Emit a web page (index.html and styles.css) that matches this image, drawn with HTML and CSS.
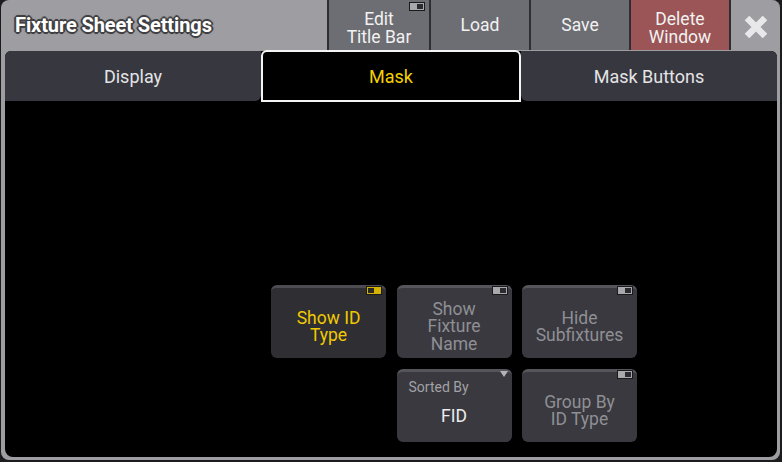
FILE: index.html
```html
<!DOCTYPE html>
<html>
<head>
<meta charset="utf-8">
<link rel="stylesheet" href="styles.css">
</head>
<body>
<div class="window">
  <div class="titlebar">
    <div class="title">Fixture Sheet Settings</div>
    <div class="tbtns">
      <div class="tbtn edit two"><span>Edit<br>Title Bar</span><span class="ind off"><i></i></span></div>
      <div class="tbtn">Load</div>
      <div class="tbtn">Save</div>
      <div class="tbtn del two"><span>Delete<br>Window</span></div>
      <div class="tbtn close">
        <svg width="24" height="22" viewBox="0 0 24 22"><path d="M3 2 L21 20 M21 2 L3 20" stroke="#e8e8ea" stroke-width="6.5" stroke-linecap="butt"/></svg>
      </div>
    </div>
  </div>
  <div class="panel">
    <div class="tabs">
      <div class="tab first">Display</div>
      <div class="tab active">Mask</div>
      <div class="tab last">Mask Buttons</div>
    </div>
    <div class="content">
      <div class="grid">
        <div class="btn on"><span>Show ID<br>Type</span><span class="ind yellow"><i></i></span></div>
        <div class="btn"><span>Show<br>Fixture<br>Name</span><span class="ind off"><i></i></span></div>
        <div class="btn"><span>Hide<br>Subfixtures</span><span class="ind off"><i></i></span></div>
        <div class="cell-empty"></div>
        <div class="btn select"><span class="label">Sorted By</span><span class="value">FID</span><span class="tri"></span></div>
        <div class="btn"><span>Group By<br>ID Type</span><span class="ind off"><i></i></span></div>
      </div>
    </div>
  </div>
</div>
</body>
</html>
```
FILE: styles.css
```css
html, body {
  margin: 0;
  padding: 0;
  background: #1c1c1e;
  font-family: Roboto, "Noto Sans", sans-serif;
}
.window {
  margin-left: 1px;
  width: 779px;
  height: 460px;
  background: #9d9da2;
  border-radius: 8px;
  display: flex;
  flex-direction: column;
  overflow: hidden;
}
.titlebar {
  height: 50px;
  display: flex;
  flex-shrink: 0;
}
.title {
  flex: 1;
  padding-left: 14px;
  display: flex;
  align-items: center;
  font-weight: bold;
  font-size: 20px;
  letter-spacing: -0.1px;
  color: #fff;
  text-shadow: -1px -1px 0 #404042, 1px -1px 0 #404042, -1px 1px 0 #404042, 1px 1px 0 #404042, 0 2px 0 #404042, 2px 0 0 #404042, -2px 0 0 #404042, 0 -2px 0 #404042, 0 0 3px #2a2a2c;
}
.tbtns {
  display: flex;
  gap: 2px;
  padding-left: 2px;
  background: #2e2e32;
}
.tbtn {
  position: relative;
  width: 98px;
  background: #6d6d74;
  color: #f2f2f2;
  font-size: 17.5px;
  line-height: 17.5px;
  display: flex;
  align-items: center;
  justify-content: center;
  text-align: center;
  padding-top: 2px;
  box-sizing: border-box;
}
.tbtn.two span:first-child { padding-top: 5px; }
.tbtn.edit { width: 100px; }
.tbtn.del { background: #9b5556; }
.tbtn.close {
  width: 49px;
  background: #9d9da2;
  padding-top: 3px;
}
.ind {
  position: absolute;
  top: 1px;
  right: 4px;
  width: 16px;
  height: 9px;
  box-sizing: border-box;
  border: 1px solid #1a1a1c;
  background: #a9a9ac;
  display: flex;
  justify-content: flex-end;
  padding: 1px;
}
.ind i {
  display: block;
  width: 6px;
  height: 5px;
  background: #2c2c30;
}
.tbtn .ind { top: 2px; right: 4px; }
.ind.yellow {
  background: #d6b200;
  justify-content: flex-start;
}
.ind.yellow i { background: #2a2a20; }
.panel {
  flex: 1;
  margin: 1px 3px 3px 4px;
  background: #000;
  border-radius: 6px 6px 8px 8px;
  display: flex;
  flex-direction: column;
}
.tabs {
  height: 50px;
  display: flex;
  flex-shrink: 0;
}
.tab {
  flex: 1;
  background: #37373f;
  color: #e4e4e6;
  font-size: 18px;
  display: flex;
  align-items: center;
  justify-content: center;
}
.tab.first { border-radius: 6px 0 6px 0; }
.tab.last { border-radius: 0 6px 0 6px; }
.tab.active {
  background: #000;
  color: #f5d000;
  border: 2px solid #f4f4f4;
  border-radius: 6px 6px 0 0;
  margin: -1px 0 -1px 0;
}
.content {
  flex: 1;
  padding: 184px 0 0 266px;
}
.grid {
  display: grid;
  grid-template-columns: repeat(3, 115px);
  grid-auto-rows: 73px;
  column-gap: 10.5px;
  row-gap: 11px;
}
.btn {
  position: relative;
  background: #39393f;
  border-top: 3px solid #55555b;
  border-radius: 6px;
  box-sizing: border-box;
  color: #8f8f94;
  font-size: 17.5px;
  line-height: 17.5px;
  text-align: center;
  display: flex;
  align-items: center;
  justify-content: center;
  padding-top: 8px;
}
.btn .ind { top: -2px; right: 4px; }
.btn.on {
  background: #2e2e33;
  border-top-color: #4c4c52;
  color: #f2c900;
}
.btn.select {
  flex-direction: column;
  align-items: stretch;
  justify-content: flex-start;
  padding: 0;
}
.btn.select .label {
  font-size: 14px;
  line-height: 16px;
  color: #a2a2a6;
  text-align: left;
  padding: 7px 0 0 12px;
}
.btn.select .value {
  flex: 1;
  display: flex;
  align-items: center;
  justify-content: center;
  color: #ececee;
  padding-bottom: 4px;
}
.tri {
  position: absolute;
  top: -1px;
  right: 4px;
  width: 0;
  height: 0;
  border-left: 4px solid transparent;
  border-right: 4px solid transparent;
  border-top: 6px solid #b4b4b8;
}
```
